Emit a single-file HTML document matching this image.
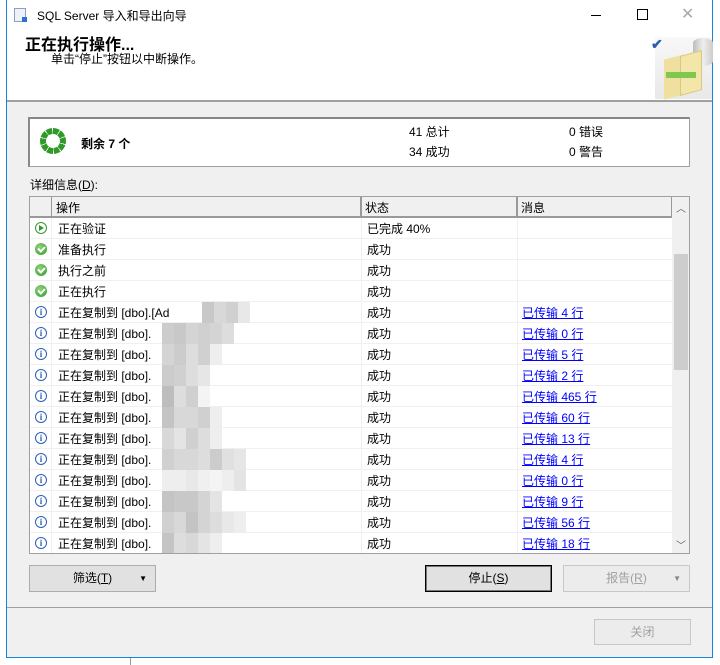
<!DOCTYPE html>
<html><head><meta charset="utf-8"><style>
*{margin:0;padding:0;box-sizing:border-box}
body{width:720px;height:665px;background:#fff;position:relative;overflow:hidden;font-family:"Liberation Sans","Noto Sans CJK SC",sans-serif;font-size:12px;color:#000}
.a{position:absolute}
.win{left:6px;top:0;width:707px;height:658px;border:1px solid #1883d7;border-top:none;background:#f0f0f0}
.btn{position:absolute;background:#e1e1e1;border:1px solid #adadad;text-align:center;line-height:25px;font-size:12px}
.row{position:absolute;left:0;width:642px;height:21px;border-bottom:1px solid #f0f0f0;background:#fff}
.row span{position:absolute;top:2px;white-space:nowrap}
.ic{position:absolute;left:5px;top:4px;width:12px;height:12px;border-radius:50%}
.ok{background:radial-gradient(circle at 40% 35%,#8fd47a,#2f9a2a)}
.ok:after{content:"";position:absolute;left:3px;top:3px;width:5px;height:3px;border-left:2px solid #fff;border-bottom:2px solid #fff;transform:rotate(-45deg)}
.inf{border:1px solid #2b5fb8;background:#fff;color:#2b5fb8;font:bold 9px "Liberation Serif",serif;text-align:center;line-height:10px}
.lk{color:#0000ff;text-decoration:underline}
.blur{position:absolute;top:0;height:21px;display:flex}
.blur i{display:block;width:12px;height:21px}
</style></head><body>
<div class="a win"></div>
<div class="a" style="left:7px;top:0;width:705px;height:100px;background:#fff"></div>
<div class="a" style="left:14px;top:8px;width:12px;height:14px;border:1px solid #8aa0c0;background:#eef2f8"></div>
<div class="a" style="left:22px;top:17px;width:5px;height:5px;background:#3070d0"></div>
<div class="a" style="left:37px;top:7px;font-size:12px">SQL Server 导入和导出向导</div>
<div class="a" style="left:591px;top:15px;width:10px;height:1px;background:#000"></div>
<div class="a" style="left:637px;top:9px;width:11px;height:11px;border:1px solid #000"></div>
<div class="a" style="left:681px;top:4px;font-size:16px;color:#aaa">✕</div>
<div class="a" style="left:25px;top:37px;font-size:16px;font-weight:bold;line-height:17px">正在执行操作...</div>
<div class="a" style="left:51px;top:53px;font-size:12px;line-height:13px">单击“停止”按钮以中断操作。</div>
<div class="a" style="left:655px;top:37px;width:57px;height:62px;background:linear-gradient(#f8f8f8,#e8e8e8)"></div>
<div class="a" style="left:693px;top:38px;width:20px;height:28px;border-radius:10px/5px;background:linear-gradient(90deg,#bbb,#eee,#ccc)"></div>
<div class="a" style="left:664px;top:57px;width:20px;height:40px;background:#f0e0a0;transform:skewY(-15deg)"></div>
<div class="a" style="left:680px;top:53px;width:22px;height:40px;background:#f3e6a8;transform:skewY(-15deg);border:1px solid #d8c880"></div>
<div class="a" style="left:666px;top:72px;width:30px;height:6px;background:#7ec850"></div>
<div class="a" style="left:651px;top:36px;color:#2a5fb0;font-size:14px;font-weight:bold">✔</div>
<div class="a" style="left:7px;top:100px;width:705px;height:2px;background:#a0a0a0"></div>
<div class="a" style="left:28px;top:117px;width:662px;height:50px;background:#fff;border:1px solid #a0a0a0;border-top:2px solid #888;border-left:2px solid #888"></div>
<div class="a" style="left:40px;top:128px;width:26px;height:26px;border-radius:50%;background:repeating-conic-gradient(#2f9a2a 0 32deg,#fff 32deg 36deg)"></div>
<div class="a" style="left:46px;top:134px;width:14px;height:14px;border-radius:50%;background:#fff"></div>
<div class="a" style="left:81px;top:135px;font-weight:bold;font-size:12px">剩余 7 个</div>
<div class="a" style="left:409px;top:123px">41 总计</div>
<div class="a" style="left:409px;top:143px">34 成功</div>
<div class="a" style="left:569px;top:123px">0 错误</div>
<div class="a" style="left:569px;top:143px">0 警告</div>
<div class="a" style="left:30px;top:176px">详细信息(<u>D</u>):</div>
<div class="a" style="left:29px;top:196px;width:661px;height:358px;border:1px solid #a0a0a0;background:#fff;overflow:hidden">
 <div class="a" style="left:0;top:0;width:642px;height:21px;background:#f0f0f0;border-bottom:2px solid #999"></div>
 <div class="a" style="left:21px;top:0;width:1px;height:21px;background:#999"></div>
 <div class="a" style="left:330px;top:0;width:2px;height:21px;background:#999"></div>
 <div class="a" style="left:486px;top:0;width:2px;height:21px;background:#999"></div>
 <div class="a" style="left:641px;top:0;width:2px;height:21px;background:#999"></div>
 <div class="a" style="left:26px;top:2px">操作</div>
 <div class="a" style="left:335px;top:2px">状态</div>
 <div class="a" style="left:491px;top:2px">消息</div>
 <div class="a" style="left:0;top:21px;width:642px;height:340px">
  <div class="row" style="top:0"><div class="ic" style="border:1px solid #2f9a2a;background:#fff"><div class="a" style="left:3px;top:2px;border-left:5px solid #2f9a2a;border-top:3px solid transparent;border-bottom:3px solid transparent"></div></div><span style="left:28px">正在验证</span><span style="left:337px">已完成 40%</span></div>
  <div class="row" style="top:21px"><div class="ic ok"></div><span style="left:28px">准备执行</span><span style="left:337px">成功</span></div>
  <div class="row" style="top:42px"><div class="ic ok"></div><span style="left:28px">执行之前</span><span style="left:337px">成功</span></div>
  <div class="row" style="top:63px"><div class="ic ok"></div><span style="left:28px">正在执行</span><span style="left:337px">成功</span></div>
  <div class="row" style="top:84px"><div class="ic inf">i</div><span style="left:28px">正在复制到 [dbo].[Ad</span><span style="left:337px">成功</span><span class="lk" style="left:492px">已传输 4 行</span><div class="blur" style="left:172px"><i style="background:#c8c8c8"></i><i style="background:#d8d8d8"></i><i style="background:#d0d0d0"></i><i style="background:#e8e8e8"></i></div></div>
  <div class="row" style="top:105px"><div class="ic inf">i</div><span style="left:28px">正在复制到 [dbo].</span><span style="left:337px">成功</span><span class="lk" style="left:492px">已传输 0 行</span><div class="blur" style="left:132px"><i style="background:#ccc"></i><i style="background:#c8c8c8"></i><i style="background:#d4d4d4"></i><i style="background:#d0d0d0"></i><i style="background:#d4d4d4"></i><i style="background:#ddd"></i></div></div>
  <div class="row" style="top:126px"><div class="ic inf">i</div><span style="left:28px">正在复制到 [dbo].</span><span style="left:337px">成功</span><span class="lk" style="left:492px">已传输 5 行</span><div class="blur" style="left:132px"><i style="background:#d4d4d4"></i><i style="background:#ccc"></i><i style="background:#ddd"></i><i style="background:#d0d0d0"></i><i style="background:#eee"></i></div></div>
  <div class="row" style="top:147px"><div class="ic inf">i</div><span style="left:28px">正在复制到 [dbo].</span><span style="left:337px">成功</span><span class="lk" style="left:492px">已传输 2 行</span><div class="blur" style="left:132px"><i style="background:#ccc"></i><i style="background:#d0d0d0"></i><i style="background:#ddd"></i><i style="background:#e6e6e6"></i></div></div>
  <div class="row" style="top:168px"><div class="ic inf">i</div><span style="left:28px">正在复制到 [dbo].</span><span style="left:337px">成功</span><span class="lk" style="left:492px">已传输 465 行</span><div class="blur" style="left:132px"><i style="background:#bdbdbd"></i><i style="background:#ddd"></i><i style="background:#d0d0d0"></i><i style="background:#f4f4f4"></i></div></div>
  <div class="row" style="top:189px"><div class="ic inf">i</div><span style="left:28px">正在复制到 [dbo].</span><span style="left:337px">成功</span><span class="lk" style="left:492px">已传输 60 行</span><div class="blur" style="left:132px"><i style="background:#c4c4c4"></i><i style="background:#d8d8d8"></i><i style="background:#d8d8d8"></i><i style="background:#d0d0d0"></i><i style="background:#eee"></i></div></div>
  <div class="row" style="top:210px"><div class="ic inf">i</div><span style="left:28px">正在复制到 [dbo].</span><span style="left:337px">成功</span><span class="lk" style="left:492px">已传输 13 行</span><div class="blur" style="left:132px"><i style="background:#d8d8d8"></i><i style="background:#e4e4e4"></i><i style="background:#d0d0d0"></i><i style="background:#ddd"></i><i style="background:#eee"></i></div></div>
  <div class="row" style="top:231px"><div class="ic inf">i</div><span style="left:28px">正在复制到 [dbo].</span><span style="left:337px">成功</span><span class="lk" style="left:492px">已传输 4 行</span><div class="blur" style="left:132px"><i style="background:#d0d0d0"></i><i style="background:#d8d8d8"></i><i style="background:#d8d8d8"></i><i style="background:#ddd"></i><i style="background:#ccc"></i><i style="background:#e0e0e0"></i><i style="background:#e6e6e6"></i></div></div>
  <div class="row" style="top:252px"><div class="ic inf">i</div><span style="left:28px">正在复制到 [dbo].</span><span style="left:337px">成功</span><span class="lk" style="left:492px">已传输 0 行</span><div class="blur" style="left:132px"><i style="background:#eee"></i><i style="background:#eee"></i><i style="background:#e8e8e8"></i><i style="background:#f0f0f0"></i><i style="background:#f4f4f4"></i><i style="background:#eee"></i><i style="background:#e4e4e4"></i></div></div>
  <div class="row" style="top:273px"><div class="ic inf">i</div><span style="left:28px">正在复制到 [dbo].</span><span style="left:337px">成功</span><span class="lk" style="left:492px">已传输 9 行</span><div class="blur" style="left:132px"><i style="background:#c4c4c4"></i><i style="background:#c8c8c8"></i><i style="background:#c8c8c8"></i><i style="background:#d4d4d4"></i><i style="background:#e4e4e4"></i></div></div>
  <div class="row" style="top:294px"><div class="ic inf">i</div><span style="left:28px">正在复制到 [dbo].</span><span style="left:337px">成功</span><span class="lk" style="left:492px">已传输 56 行</span><div class="blur" style="left:132px"><i style="background:#d0d0d0"></i><i style="background:#d8d8d8"></i><i style="background:#c4c4c4"></i><i style="background:#d4d4d4"></i><i style="background:#ddd"></i><i style="background:#e8e8e8"></i><i style="background:#eee"></i></div></div>
  <div class="row" style="top:315px"><div class="ic inf">i</div><span style="left:28px">正在复制到 [dbo].</span><span style="left:337px">成功</span><span class="lk" style="left:492px">已传输 18 行</span><div class="blur" style="left:132px"><i style="background:#c4c4c4"></i><i style="background:#ddd"></i><i style="background:#d8d8d8"></i><i style="background:#e4e4e4"></i><i style="background:#eee"></i></div></div>
 </div>
 <div class="a" style="left:21px;top:21px;width:1px;height:340px;background:#f0f0f0"></div>
 <div class="a" style="left:331px;top:21px;width:1px;height:340px;background:#f0f0f0"></div>
 <div class="a" style="left:487px;top:21px;width:1px;height:340px;background:#f0f0f0"></div>
 <div class="a" style="left:642px;top:0;width:17px;height:356px;background:#f0f0f0"></div>
 <div class="a" style="left:644px;top:57px;width:14px;height:116px;background:#cdcdcd"></div>
 <div class="a" style="left:646px;top:3px;font-size:10px;color:#606060">︿</div>
 <div class="a" style="left:646px;top:340px;font-size:10px;color:#606060">﹀</div>
</div>
<div class="btn" style="left:29px;top:565px;width:127px;height:27px">筛选(<u>T</u>) <span style="position:absolute;right:8px;font-size:8px">▼</span></div>
<div class="btn" style="left:425px;top:565px;width:127px;height:27px;border:1px solid #000;box-shadow:inset 0 0 0 1px #777">停止(<u>S</u>)</div>
<div class="btn" style="left:563px;top:565px;width:127px;height:27px;color:#a0a0a0;background:#ececec;border-color:#c8c8c8">报告(<u>R</u>) <span style="position:absolute;right:8px;font-size:8px;color:#888">▼</span></div>
<div class="a" style="left:7px;top:607px;width:705px;height:1px;background:#a0a0a0"></div>
<div class="btn" style="left:594px;top:619px;width:97px;height:26px;color:#a0a0a0;background:#ececec;border-color:#c8c8c8">关闭</div>
<div class="a" style="left:130px;top:658px;width:1px;height:7px;background:#999"></div>
</body></html>
